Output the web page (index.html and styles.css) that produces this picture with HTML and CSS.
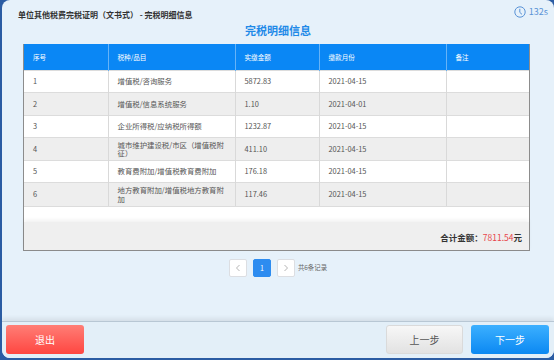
FILE: index.html
```html
<!DOCTYPE html>
<html lang="zh-CN">
<head>
    <meta charset="UTF-8">
    <meta name="viewport" content="width=device-width, initial-scale=1.0">
    <title>完税明细信息</title>
    <link rel="stylesheet" href="styles.css">
</head>
<body>
    <div class="screen">
        <div class="top">
            <div class="title">单位其他税费完税证明（文书式） - 完税明细信息</div>
            <div class="timer">
                <svg width="12" height="12" viewBox="0 0 12 12">
                    <circle cx="6" cy="6" r="5.2" fill="none" stroke="#5a93d6" stroke-width="1"/>
                    <path d="M5.8 2.8 V6.4 L8 8.4" fill="none" stroke="#5a93d6" stroke-width="1"/>
                </svg>
                <span>132s</span>
            </div>
        </div>
        <h1 class="heading">完税明细信息</h1>

        <div class="box">
            <table class="list">
                <colgroup>
                    <col style="width:84px">
                    <col style="width:127px">
                    <col style="width:84px">
                    <col style="width:127px">
                    <col style="width:83px">
                </colgroup>
                <thead>
                    <tr>
                        <th>序号</th>
                        <th>税种/品目</th>
                        <th>实缴金额</th>
                        <th>缴款月份</th>
                        <th>备注</th>
                    </tr>
                </thead>
                <tbody>
                    <tr>
                        <td>1</td>
                        <td>增值税/咨询服务</td>
                        <td>5872.83</td>
                        <td>2021-04-15</td>
                        <td></td>
                    </tr>
                    <tr>
                        <td>2</td>
                        <td>增值税/信息系统服务</td>
                        <td>1.10</td>
                        <td>2021-04-01</td>
                        <td></td>
                    </tr>
                    <tr>
                        <td>3</td>
                        <td>企业所得税/应纳税所得额</td>
                        <td>1232.87</td>
                        <td>2021-04-15</td>
                        <td></td>
                    </tr>
                    <tr>
                        <td>4</td>
                        <td>城市维护建设税/市区（增值税附征）</td>
                        <td>411.10</td>
                        <td>2021-04-15</td>
                        <td></td>
                    </tr>
                    <tr>
                        <td>5</td>
                        <td>教育费附加/增值税教育费附加</td>
                        <td>176.18</td>
                        <td>2021-04-15</td>
                        <td></td>
                    </tr>
                    <tr>
                        <td>6</td>
                        <td>地方教育附加/增值税地方教育附加</td>
                        <td>117.46</td>
                        <td>2021-04-15</td>
                        <td></td>
                    </tr>
                </tbody>
            </table>
            <div class="blank"></div>
            <div class="total">合计金额：<span class="money">7811.54</span>元</div>
        </div>

        <div class="pager">
            <div class="page">
                <svg width="6" height="8" viewBox="0 0 6 8"><path d="M4.5 1 L1.5 4 L4.5 7" fill="none" stroke="#b5b5b5" stroke-width="1"/></svg>
            </div>
            <div class="page active">1</div>
            <div class="page">
                <svg width="6" height="8" viewBox="0 0 6 8"><path d="M1.5 1 L4.5 4 L1.5 7" fill="none" stroke="#b5b5b5" stroke-width="1"/></svg>
            </div>
            <span class="count">共6条记录</span>
        </div>

        <div class="bottom">
            <div class="btn red">退出</div>
            <div class="right">
                <div class="btn grey">上一步</div>
                <div class="btn blue">下一步</div>
            </div>
        </div>
    </div>
</body>
</html>
```

FILE: styles.css
```css
* {
    font-family: "Noto Sans CJK SC", "Noto Sans", sans-serif;
    box-sizing: border-box;
}

body {
    margin: 0;
    width: 554px;
    height: 360px;
    background-color: #2b5ca3;
    overflow: hidden;
}

.screen {
    width: 552px;
    height: 358px;
    margin-left: 2px;
    background-color: #e6f1fa;
    border-radius: 8px;
    overflow: hidden;
    display: flex;
    flex-direction: column;
}

.top {
    display: flex;
    justify-content: space-between;
    align-items: flex-start;
    padding: 9px 6px 0 16px;
    height: 22px;
}

.title {
    font-size: 8px;
    line-height: 12px;
    font-weight: bold;
    color: #333;
}

.timer {
    display: flex;
    align-items: center;
    gap: 3px;
    margin-top: -3px;
    color: #5a93d6;
    font-size: 9px;
    line-height: 12px;
}

.heading {
    margin: 0;
    text-align: center;
    font-size: 11px;
    line-height: 16px;
    height: 16px;
    color: #1f8ae8;
    font-weight: bold;
}

.box {
    margin: 6px 0 0 21px;
    width: 507px;
    border: 1px solid #8c8c8c;
    border-top: none;
    background-color: #fff;
}

.list {
    width: 505px;
    border-collapse: collapse;
    table-layout: fixed;
}

.list th {
    height: 26px;
    background-color: #0a87f5;
    color: #fff;
    font-size: 6.6px;
    font-weight: normal;
    text-align: left;
    padding: 0 9px;
    border-left: 1px solid #66b3f7;
}

.list th:first-child,
.list td:first-child {
    border-left: none;
}

.list td {
    height: 22.6px;
    font-size: 7.4px;
    line-height: 8.5px;
    color: #555;
    padding: 0 9px;
    border-left: 1px solid #d9d9d9;
    border-top: 1px solid #dcdcdc;
}

.list tbody tr:nth-child(even) td {
    background-color: #eeeeee;
}

.blank {
    height: 16px;
    border-top: 1px solid #dcdcdc;
}

.total {
    height: 28px;
    background-color: #efefef;
    box-shadow: 0 -2px 4px rgba(0, 0, 0, 0.06);
    text-align: right;
    padding-right: 7px;
    font-size: 8.5px;
    line-height: 30px;
    font-weight: bold;
    color: #333;
}

.total .money {
    color: #e8454b;
    font-weight: normal;
}

.pager {
    display: flex;
    justify-content: center;
    align-items: center;
    gap: 6px;
    margin-top: 8px;
    height: 18px;
}

.page {
    width: 18px;
    height: 18px;
    background-color: #fff;
    border: 1px solid #dcdee2;
    border-radius: 2px;
    display: flex;
    justify-content: center;
    align-items: center;
    font-size: 7px;
    color: #666;
}

.page.active {
    background-color: #2d8cf0;
    border-color: #2d8cf0;
    color: #fff;
}

.count {
    font-size: 6.4px;
    color: #666;
    margin-left: -3px;
}

.bottom {
    margin-top: auto;
    height: 37px;
    border-top: 1px solid #b8c7d4;
    box-shadow: 0 -3px 4px rgba(0, 0, 0, 0.07);
    background-color: #e3eff8;
    display: flex;
    justify-content: space-between;
    padding: 3px 5px 0 4px;
}

.right {
    display: flex;
    gap: 8px;
}

.btn {
    width: 78px;
    height: 29px;
    border-radius: 3px;
    text-align: center;
    line-height: 29px;
    font-size: 10px;
    color: #fff;
}

.btn.red {
    background: linear-gradient(#ff7e76, #ff4641);
}

.btn.grey {
    width: 77px;
    background: linear-gradient(#f7f7f7, #e2e2e2);
    border: 1px solid #dadada;
    line-height: 27px;
    color: #555;
}

.btn.blue {
    background: linear-gradient(#3cb0ff, #0b88f2);
}
```
